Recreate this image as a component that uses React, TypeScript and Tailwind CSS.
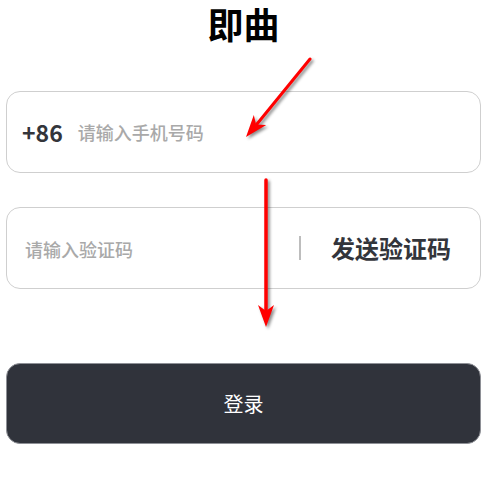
import React from "react";

const font = { fontFamily: '"Noto Sans CJK SC", "Noto Sans", sans-serif' };

function Arrows() {
  // red annotation arrows drawn over the form
  return (
    <svg
      className="pointer-events-none absolute left-0 top-0"
      width={491}
      height={483}
      viewBox="0 0 491 483"
      style={{ filter: "drop-shadow(2px 2px 1.5px rgba(0,0,0,0.45))" }}
    >
      <line x1={310} y1={59} x2={257} y2={124} stroke="#ff0000" strokeWidth={3} strokeLinecap="round" />
      <polygon points="246,137 253.8,114.9 256.1,124.6 266.2,125.1" fill="#ff0000" />
      <line x1={266} y1={180} x2={266} y2={310} stroke="#ff0000" strokeWidth={3.5} strokeLinecap="round" />
      <polygon points="266,327 258,305 266,311 274,305" fill="#ff0000" />
    </svg>
  );
}

export default function App() {
  return (
    <div className="relative h-[483px] w-[491px] overflow-hidden bg-white" style={font}>
      <div className="flex flex-col pl-[6px] pr-[10px]">
        <h1 className="mt-[4px] text-center text-[36px] font-bold leading-[38px] text-black">即曲</h1>

        <div className="mt-[49px] flex h-[82px] items-center rounded-[14px] border border-[#cfcfcf] pl-[15px]">
          <span className="text-[23px] font-bold text-[#33353b]">+86</span>
          <span className="ml-[15px] text-[18px] font-medium text-[#a9a9a9]">请输入手机号码</span>
        </div>

        <div className="mt-[34px] flex h-[82px] items-center rounded-[14px] border border-[#cfcfcf] pl-[18px] pr-[29px]">
          <span className="mt-[3px] flex-1 text-[18px] font-medium text-[#a9a9a9]">请输入验证码</span>
          <span className="h-[24px] w-[2px] bg-[#bdbdbd]" />
          <span className="ml-[30px] text-[24px] font-bold text-[#33353b]">发送验证码</span>
        </div>

        <button className="mt-[74px] flex h-[81px] items-center justify-center rounded-[14px] border border-[#8e9096] bg-[#30333b] text-[20px] text-white">
          登录
        </button>
      </div>
      <Arrows />
    </div>
  );
}
